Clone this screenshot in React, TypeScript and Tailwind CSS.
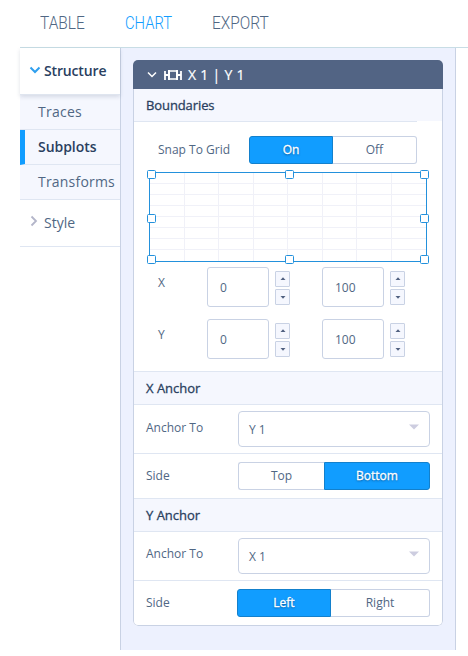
import React from 'react';

const edge = 'border-[#c9d2e4]';

function Header({ title, className = '' }: { title: string; className?: string }) {
  return (
    <div className={`flex h-[34px] shrink-0 items-center border-y border-[#dfe6f2] bg-[#f5f7fe] pt-[2px] pl-3 text-[13px] font-normal text-[#2a3f5f] [-webkit-text-stroke:0.3px_#2a3f5f] ${className}`}>
      {title}
    </div>
  );
}

function Segment({ label, active, className }: { label: string; active?: boolean; className: string }) {
  return (
    <button
      className={`flex h-7 items-center justify-center border text-[12px] ${active ? 'border-[#1380cc] bg-[#119dff] text-white [text-shadow:0_1px_2px_rgba(0,50,100,0.7)] [-webkit-text-stroke:0.3px_#fff]' : 'border-[#c9d2e4] bg-white text-[#506784]'} ${className}`}
    >
      {label}
    </button>
  );
}

function Select({ value }: { value: string }) {
  return (
    <div className={`flex h-9 w-[192px] items-center justify-between rounded border ${edge} bg-white pr-[10px] pl-[10px] text-[12px] text-[#506784]`}>
      <span className="pt-[2px]">{value}</span>
      <svg width="10" height="6" viewBox="0 0 10 6" className="mb-1"><path d="M0 0.5h10L5 5.5z" fill="#cdcde0" /></svg>
    </div>
  );
}

function Stepper() {
  return (
    <div className="mt-[2px] ml-[6px] flex flex-col gap-[2px]">
      {['M1.5 4h5L4 1.2z', 'M1.5 2h5L4 4.8z'].map((d) => (
        <div key={d} className={`flex h-4 w-[15px] items-center justify-center rounded-[1px] border ${edge} bg-[#f5f7fe]`}>
          <svg width="8" height="6" viewBox="0 0 8 6"><path d={d} fill="#506080" /></svg>
        </div>
      ))}
    </div>
  );
}

function NumberField({ value }: { value: string }) {
  return (
    <div className="flex items-center">
      <div className={`flex h-10 w-[62px] items-center rounded-[3px] border ${edge} pt-[2px] pl-3 text-[12px] text-[#506784]`}>{value}</div>
      <Stepper />
    </div>
  );
}

function RangeRow({ axis }: { axis: string }) {
  return (
    <div className="flex h-10">
      <span className="w-[49px] pt-[7px] text-[12px] leading-[18px]">{axis}</span>
      <NumberField value="0" />
      <div className="w-8" />
      <NumberField value="100" />
    </div>
  );
}

function GridCanvas() {
  // Top-left corners of the resize handles
  const handles = [[0, 2], [138, 2], [273, 2], [0, 46], [273, 46], [0, 87], [138, 87], [273, 87]];
  return (
    <svg width="284" height="98" viewBox="0 0 284 98" className="block">
      <g stroke="#f0f1f8" strokeWidth="1">
        {[37.5, 71.5, 106.5, 140.5, 175.5, 209.5, 244.5].map((x) => <path key={x} d={`M${x} 5V93`} />)}
        {[15.5, 26.5, 37.5, 48.5, 59.5, 70.5, 81.5].map((y) => <path key={y} d={`M3 ${y}H279`} />)}
      </g>
      <rect x="2.5" y="4.5" width="277" height="89" fill="none" stroke="#2391dc" />
      {handles.map(([x, y]) => (
        <rect key={`${x}-${y}`} x={x + 0.5} y={y + 0.5} width="8" height="8" rx="1" fill="white" stroke="#2391dc" />
      ))}
    </svg>
  );
}

function NavItem({ label, active, className }: { label: string; active?: boolean; className: string }) {
  return (
    <div className={`flex h-[35px] items-center border-b border-[#dfe6f2] bg-[#f5f7fe] pb-[2px] text-[14px] ${active ? 'border-l-[5px] border-l-[#119dff] pl-[13px] font-semibold text-[#2a3f5f]' : 'pl-[18px] text-[#506784]'}`}>
      <span className={className}>{label}</span>
    </div>
  );
}

export default function App() {
  return (
    <div className="h-[656px] w-[468px] overflow-hidden bg-white pl-5 font-['Open_Sans',sans-serif] text-[#506784]">
      <nav className="flex h-12 items-center border-b border-[#c8dde5] pb-[2px] pl-5 font-['Roboto',sans-serif] text-[18px] font-light">
        <div className="w-[85px]"><span className="inline-block origin-left scale-x-[0.86]">TABLE</span></div>
        <div className="w-[87px] text-[#119dff]"><span className="inline-block origin-left scale-x-[0.82]">CHART</span></div>
        <div><span className="inline-block origin-left scale-x-[0.86]">EXPORT</span></div>
      </nav>
      <div className="flex h-[602px]">
        <aside className="w-[100px] shrink-0 text-[14px]">
          <div className="relative flex h-[47px] items-center border-b border-[#dfe5ef] pb-[2px] pl-[9px] font-semibold text-[#2a3f5f] shadow-[0_2px_4px_rgba(42,63,95,0.15)]">
            <svg width="12" height="8" viewBox="0 0 12 8" className="mr-[3px]"><path d="M1.5 1.5L6 6l4.5-4.5" fill="none" stroke="#2f9fee" strokeWidth="2" /></svg>
            <span className="tracking-[-0.15px]">Structure</span>
          </div>
          <NavItem label="Traces" className="tracking-[0.25px]" />
          <NavItem label="Subplots" active className="tracking-[-0.05px]" />
          <NavItem label="Transforms" className="tracking-[0.2px]" />
          <div className="flex h-[47px] items-center border-b border-[#dfe6f2] pb-[2px] pl-[10px]">
            <svg width="8" height="12" viewBox="0 0 8 12" className="mr-[6px] mb-[3px]"><path d="M1.5 1.5L6 6l-4.5 4.5" fill="none" stroke="#b3b5c9" strokeWidth="1.8" /></svg>
            <span>Style</span>
          </div>
        </aside>
        <main className={`w-[336px] border-x ${edge} bg-[#edf1fe] pt-3 pl-3`}>
          <div className="flex w-[310px] flex-col overflow-hidden rounded-[5px] bg-white">
            <div className="flex h-[29px] items-center bg-[#526484] pl-[14px] text-[14px] text-white">
              <svg width="10" height="8" viewBox="0 0 10 8" className="mr-[7px]"><path d="M1 1.5L5 5.5l4-4" fill="none" stroke="white" strokeWidth="1.5" /></svg>
              <svg width="18" height="12" viewBox="0 0 18 12" className="mr-[6px]"><path d="M1 2v9M17 2v9M1 6h4M13 6h4" fill="none" stroke="white" strokeWidth="1.8" /><path d="M5 1v10M13 1v10" stroke="white" strokeWidth="2" /><path d="M6 2h6M6 10h6" stroke="white" strokeWidth="1.5" /></svg>
              <span className="tracking-[0.3px] whitespace-pre [-webkit-text-stroke:0.2px_white]">X 1 | Y 1</span>
            </div>
            <div className={`flex flex-col rounded-b-[5px] border border-t-0 ${edge} pb-2`}>
              <div className="flex h-8 items-center bg-[#f5f7fe] pt-px pl-3 text-[13px] text-[#2a3f5f] [-webkit-text-stroke:0.3px_#2a3f5f]"><span className="tracking-[-0.1px]">Boundaries</span></div>
              <div className="w-[283px] border-b border-[#dfe6f2]" />
              <div className="flex pt-[14px] pl-6">
                <span className="flex w-[91px] items-center text-[12px]">Snap To Grid</span>
                <Segment label="On" active className="w-[84px] rounded-l-[3px]" />
                <Segment label="Off" className="w-[84px] rounded-r-[3px] border-l-0" />
              </div>
              <div className="h-[103px] pt-1 pl-[13px]"><GridCanvas /></div>
              <div className="flex flex-col gap-3 pl-6"><RangeRow axis="X" /><RangeRow axis="Y" /></div>
              <Header title="X Anchor" className="mt-3" />
              <div className="flex h-[49px] items-center border-b border-[#dfe6f2] pl-3 text-[12px]"><span className="w-[92px] pb-[2px]">Anchor To</span><Select value="Y 1" /></div>
              <div className="flex h-11 items-center pl-3 text-[12px]"><span className="w-[92px]">Side</span><Segment label="Top" className="w-[86px] rounded-l-[3px] border-r-0" /><Segment label="Bottom" active className="w-[106px] rounded-r-[3px]" /></div>
              <Header title="Y Anchor" />
              <div className="flex h-[49px] items-center border-b border-[#dfe6f2] pl-3 text-[12px]"><span className="w-[92px] pb-1">Anchor To</span><Select value="X 1" /></div>
              <div className="flex pt-2 pl-3 text-[12px]"><span className="flex w-[91px] items-center">Side</span><Segment label="Left" active className="w-[94px] rounded-l-[3px]" /><Segment label="Right" className="w-[99px] rounded-r-[3px] border-l-0" /></div>
            </div>
          </div>
        </main>
      </div>
    </div>
  );
}
